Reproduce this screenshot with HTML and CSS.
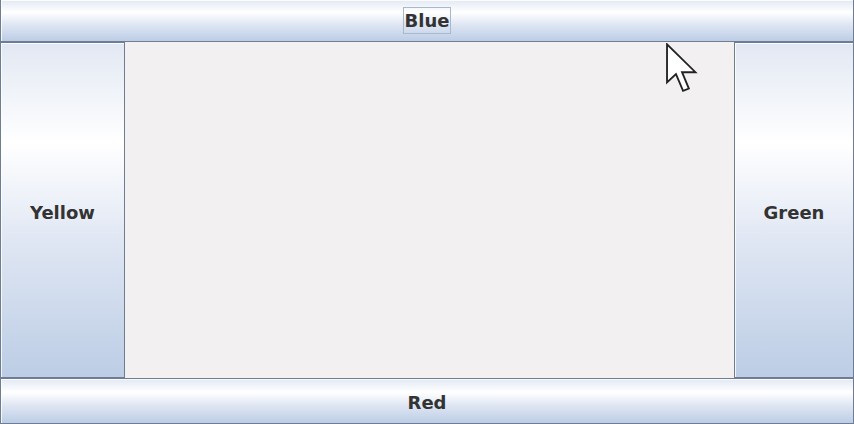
FILE: index.html
```html
<!DOCTYPE html>
<html>
<head>
<meta charset="utf-8">
<link rel="stylesheet" href="styles.css">
</head>
<body>
<div class="frame">
  <button class="btn north"><span class="focus">Blue</span></button>
  <button class="btn west">Yellow</button>
  <div class="center"></div>
  <button class="btn east">Green</button>
  <button class="btn south">Red</button>
  <svg class="cursor" width="35" height="50" viewBox="0 0 12 19">
    <polygon points="0.5,0.5 0.5,15 3.9,11.8 6.6,18.2 8.8,17.3 6.2,11.1 11.3,11.1" fill="#fff" stroke="#222" stroke-width="0.7" stroke-linejoin="miter"/>
  </svg>
</div>
</body>
</html>
```
FILE: styles.css
```css
html, body {
  margin: 0;
  padding: 0;
  background: #f3f0f2;
}
.frame {
  position: relative;
  width: 854px;
  height: 424px;
  display: grid;
  grid-template-columns: 125px 1fr 120px;
  grid-template-rows: 42px 336px 46px;
  overflow: hidden;
}
.btn {
  margin: 0;
  padding: 0;
  border: 1px solid #6f7d92;
  box-shadow: inset 1px 1px 0 rgba(255,255,255,0.8);
  background: linear-gradient(to bottom, #e2e8f3 0%, #ffffff 30%, #dfe6f3 60%, #bccde5 100%);
  font-family: "DejaVu Sans", sans-serif;
  font-weight: bold;
  font-size: 18px;
  color: #333;
  display: flex;
  align-items: center;
  justify-content: center;
  cursor: default;
}
.north {
  grid-column: 1 / -1;
  border-top: none;
}
.south {
  grid-column: 1 / -1;
  padding-top: 3px;
}
.west {
  grid-column: 1;
  padding-top: 4px;
}
.east {
  grid-column: 3;
  padding-top: 4px;
}
.center {
  grid-column: 2;
  background: #f3f0f2;
}
.focus {
  border: 1px solid #a9b8cc;
  padding: 2px 1px;
  line-height: 21px;
}
.cursor {
  position: absolute;
  left: 664px;
  top: 43px;
}
```
